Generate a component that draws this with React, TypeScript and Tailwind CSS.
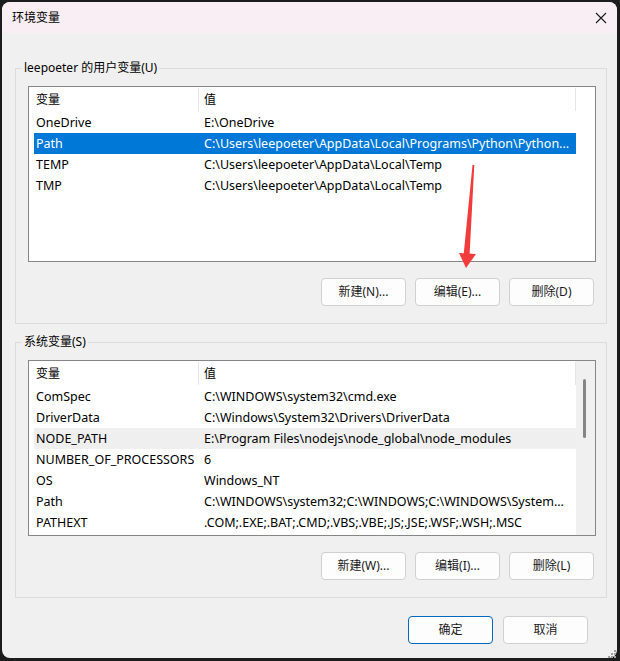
import React from "react";

const FONT = { fontFamily: '"Noto Sans", "Noto Sans CJK SC", sans-serif' };

type Row = { name: string; value: string; selected?: boolean; hover?: boolean };

const userRows: Row[] = [
  { name: "OneDrive", value: "E:\\OneDrive" },
  { name: "Path", value: "C:\\Users\\leepoeter\\AppData\\Local\\Programs\\Python\\Python...", selected: true },
  { name: "TEMP", value: "C:\\Users\\leepoeter\\AppData\\Local\\Temp" },
  { name: "TMP", value: "C:\\Users\\leepoeter\\AppData\\Local\\Temp" },
];

const sysRows: Row[] = [
  { name: "ComSpec", value: "C:\\WINDOWS\\system32\\cmd.exe" },
  { name: "DriverData", value: "C:\\Windows\\System32\\Drivers\\DriverData" },
  { name: "NODE_PATH", value: "E:\\Program Files\\nodejs\\node_global\\node_modules", hover: true },
  { name: "NUMBER_OF_PROCESSORS", value: "6" },
  { name: "OS", value: "Windows_NT" },
  { name: "Path", value: "C:\\WINDOWS\\system32;C:\\WINDOWS;C:\\WINDOWS\\System..." },
  { name: "PATHEXT", value: ".COM;.EXE;.BAT;.CMD;.VBS;.VBE;.JS;.JSE;.WSF;.WSH;.MSC" },
];

function Btn({ children, primary }: { children: React.ReactNode; primary?: boolean }) {
  return (
    <button
      className={
        "w-[85px] h-[28px] rounded-[4px] bg-[#fdfdfd] text-[12px] text-[#1a1a1a] flex items-center justify-center " +
        (primary ? "border border-[#0067c0]" : "border border-[#d0d0d0]")
      }
    >
      {children}
    </button>
  );
}

function ListView({ rows, scroll }: { rows: Row[]; scroll?: boolean }) {
  return (
    <div className="h-[176px] border border-[#868686] bg-white flex overflow-hidden">
      <div className="flex flex-col w-[547px] overflow-hidden">
        <div className="h-[25px] flex shrink-0 pt-[1px]">
          <div className="w-[169px] pl-[7px] flex items-center text-[12px] text-black">变量</div>
          <div className="w-px bg-[#e5e5e5] mb-[1px]" />
          <div className="flex-1 pl-[5px] flex items-center text-[12px] text-black">值</div>
          <div className="w-px bg-[#e5e5e5] mb-[1px]" />
        </div>
        {rows.map((r, i) => (
          <div
            key={i}
            className={
              "ml-[5px] w-[542px] h-[21px] shrink-0 flex items-center pt-[1px] text-[12.5px] " +
              (r.selected ? "bg-[#0078d7] text-white" : r.hover ? "bg-[#efefef] text-black" : "text-black")
            }
          >
            <div className="w-[168px] pl-[2px] whitespace-nowrap overflow-hidden">{r.name}</div>
            <div className="flex-1 pl-[2px] whitespace-nowrap overflow-hidden">{r.value}</div>
          </div>
        ))}
      </div>
      <div className={"flex-1 relative " + (scroll ? "bg-[#f0f0f0]" : "bg-white")}>
        {scroll && <div className="absolute left-[7px] top-[18px] w-[3px] h-[59px] rounded-full bg-[#858585]" />}
      </div>
    </div>
  );
}

function Group({ label, rows, scroll, buttons }: { label: React.ReactNode; rows: Row[]; scroll?: boolean; buttons: string[] }) {
  return (
    <fieldset className="border border-[#dcdcdc] pl-[12px] pr-[10px] pb-[17px] pt-[10px]">
      <legend className="-ml-[6px] px-[2px] text-[12px] leading-[16px] text-black">{label}</legend>
      <ListView rows={rows} scroll={scroll} />
      <div className="flex justify-end gap-[9px] mt-[16px] mr-[2px]">
        {buttons.map((b) => (
          <Btn key={b}>{b}</Btn>
        ))}
      </div>
    </fieldset>
  );
}

export default function App() {
  return (
    <div className="relative w-[620px] h-[661px] bg-[#1c1c1c] pl-[2px] pt-[2px] pr-[3px] pb-[3px]" style={FONT}>
      <div className="h-full w-full rounded-[8px] bg-[#f0f0f0] overflow-hidden flex flex-col">
        <div className="h-[31px] shrink-0 bg-[#f9eef3] flex items-center justify-between pl-[10px] pr-[9px]">
          <span className="text-[12px] text-black">环境变量</span>
          <svg width="12" height="12" viewBox="0 0 12 12" className="mr-[1px]">
            <path d="M1 1 L11 11 M11 1 L1 11" stroke="#1a1a1a" strokeWidth="1.1" />
          </svg>
        </div>
        <div className="flex-1 flex flex-col pl-[13px] pr-[10px] pt-[27px]">
          <Group label="leepoeter 的用户变量(U)" rows={userRows} buttons={["新建(N)...", "编辑(E)...", "删除(D)"]} />
          <div className="mt-[10px]">
            <Group label="系统变量(S)" rows={sysRows} scroll buttons={["新建(W)...", "编辑(I)...", "删除(L)"]} />
          </div>
          <div className="flex justify-end gap-[10px] mt-[18px] mr-[19px]">
            <Btn primary>确定</Btn>
            <Btn>取消</Btn>
          </div>
        </div>
      </div>
      <svg className="absolute left-0 top-0 pointer-events-none" width="620" height="661" viewBox="0 0 620 661">
        <polygon points="472.5,165 474.3,165 469.5,256 463.5,256" fill="#f23b3b" />
        <polygon points="459,253 476,254 466,268" fill="#f23b3b" />
        <g fill="#a0a0a0">
          <rect x="614" y="650" width="2" height="2" />
          <rect x="611" y="653" width="2" height="2" />
          <rect x="614" y="653" width="2" height="2" />
          <rect x="608" y="656" width="2" height="2" />
          <rect x="611" y="656" width="2" height="2" />
          <rect x="614" y="656" width="2" height="2" />
        </g>
      </svg>
    </div>
  );
}
